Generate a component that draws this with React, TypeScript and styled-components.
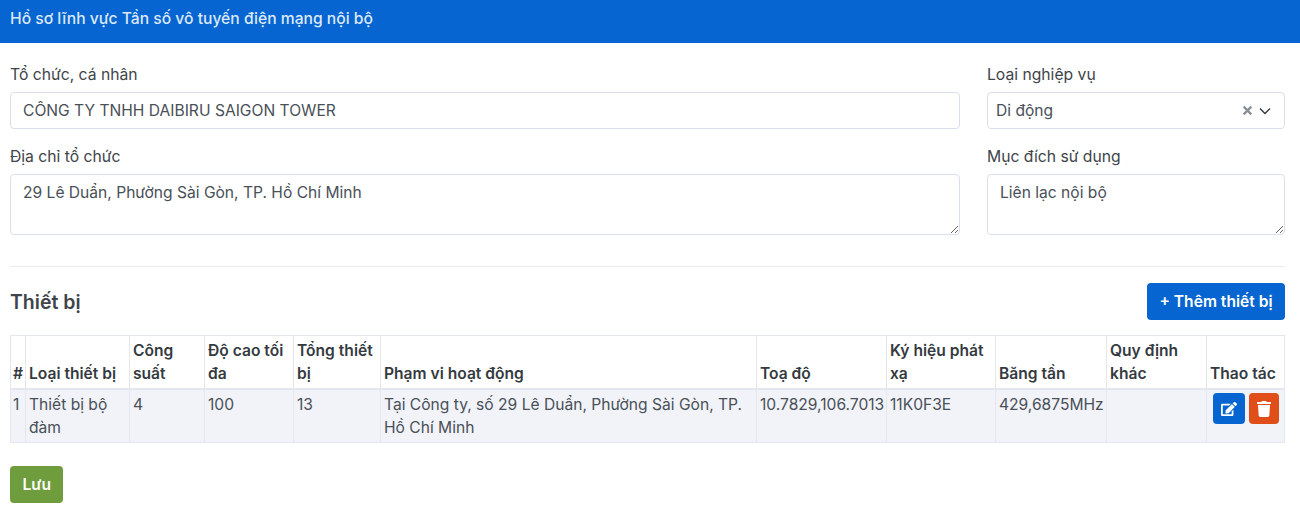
import styled, { createGlobalStyle } from "styled-components";
import { FaEdit, FaTrash } from "react-icons/fa";

const GlobalStyle = createGlobalStyle`
  html, body {
    margin: 0;
    padding: 0;
    background: #fff;
    font-family: Inter, "Noto Sans", sans-serif;
    font-size: 15.6px;
    color: #343a40;
  }
  * { box-sizing: border-box; }
`;

const TopBar = styled.header`
  height: 43px;
  padding: 0 10px 6px;
  display: flex;
  align-items: center;
  background: #0665d0;
  color: #dbe8f8;
  font-size: 15.65px;
  font-weight: 500;
`;

const Content = styled.main`
  padding: 22px 15px 0 10px;
`;

const FormGrid = styled.div`
  display: grid;
  grid-template-columns: 950px 298px;
  column-gap: 27px;
  row-gap: 18px;
`;

const Field = styled.div`
  display: flex;
  flex-direction: column;
`;

const Label = styled.label`
  height: 20px;
  line-height: 20px;
  margin-bottom: 7px;
  font-size: 15.7px;
  color: #3e444a;
`;

const TextInput = styled.input`
  height: 37px;
  padding: 0 12px;
  border: 1px solid #d8dfed;
  border-radius: 4px;
  background: #fff;
  font: inherit;
  color: #495057;
  outline: none;
`;

const TextArea = styled.textarea`
  display: block;
  height: 61px;
  padding: 7px 12px;
  border: 1px solid #d8dfed;
  border-radius: 4px;
  font: inherit;
  line-height: 22px;
  color: #495057;
  outline: none;
`;

const SelectBox = styled.div`
  height: 37px;
  padding: 0 13px 0 8px;
  display: flex;
  align-items: center;
  justify-content: space-between;
  border: 1px solid #d8dfed;
  border-radius: 4px;
  color: #495057;
`;

const SelectIcons = styled.div`
  display: flex;
  align-items: center;
  gap: 6px;
  color: #868e96;
`;

const Divider = styled.hr`
  margin: 31px 0 16px;
  border: 0;
  border-top: 1px solid #e9ecef;
`;

const SectionHead = styled.div`
  display: flex;
  align-items: center;
  justify-content: space-between;
  height: 37px;
  margin-bottom: 15px;
`;

const SectionTitle = styled.h2`
  margin: 0;
  font-size: 19.5px;
  font-weight: 600;
  color: #3e444a;
`;

const Button = styled.button<{ $bg: string }>`
  height: 37px;
  padding: 0 12.5px;
  border: 0;
  border-radius: 4px;
  background: ${(p) => p.$bg};
  color: #fff;
  font-family: inherit;
  font-size: 15.6px;
  font-weight: 600;
`;

const Table = styled.table`
  width: 1274px;
  table-layout: fixed;
  border-collapse: collapse;
  margin-bottom: 23px;
  line-height: 23px;
`;

const Th = styled.th`
  padding: 3px;
  border: 1px solid #e4e7ed;
  border-bottom: 2px solid #e4e7ed;
  text-align: left;
  vertical-align: bottom;
  font-weight: 600;
  color: #343a40;

  &:first-child {
    padding-left: 2px;
  }
`;

const Td = styled.td`
  padding: 3px;
  border: 1px solid #e4e7ed;
  background: #f1f3f9;
  vertical-align: top;
  color: #495057;

  &:first-child {
    padding-left: 2px;
  }
`;

const ActionCell = styled.div`
  display: flex;
  justify-content: center;
  gap: 4px;
`;

const IconButton = styled.button<{ $wide?: boolean; $bg: string }>`
  width: ${(p) => (p.$wide ? 32 : 30)}px;
  height: 31px;
  padding: 0;
  display: flex;
  align-items: center;
  justify-content: center;
  border: 0;
  border-radius: 4px;
  background: ${(p) => p.$bg};
  color: #fff;
  font-size: 16px;
`;

const columns = [
  { title: "#", width: 15 },
  { title: "Loại thiết bị", width: 104 },
  { title: "Công suất", width: 75 },
  { title: "Độ cao tối đa", width: 89 },
  { title: "Tổng thiết bị", width: 87 },
  { title: "Phạm vi hoạt động", width: 376 },
  { title: "Toạ độ", width: 130 },
  { title: "Ký hiệu phát xạ", width: 109 },
  { title: "Băng tần", width: 111 },
  { title: "Quy định khác", width: 100 },
  { title: "Thao tác", width: 78 },
];

const App = () => {
  return (
    <>
      <GlobalStyle />
      <TopBar>Hồ sơ lĩnh vực Tần số vô tuyến điện mạng nội bộ</TopBar>
      <Content>
        <FormGrid>
          <Field>
            <Label>Tổ chức, cá nhân</Label>
            <TextInput readOnly defaultValue="CÔNG TY TNHH DAIBIRU SAIGON TOWER" />
          </Field>
          <Field>
            <Label>Loại nghiệp vụ</Label>
            <SelectBox>
              Di động
              <SelectIcons>
                <svg width="11" height="11" viewBox="0 0 10 10">
                  <path d="M1.5 1.5l7 7M8.5 1.5l-7 7" stroke="currentColor" strokeWidth="2" />
                </svg>
                <svg width="12" height="8" viewBox="0 0 12 8" fill="none">
                  <path d="M1 1.5l5 5 5-5" stroke="#343a40" strokeWidth="1.4" />
                </svg>
              </SelectIcons>
            </SelectBox>
          </Field>
          <Field>
            <Label>Địa chỉ tổ chức</Label>
            <TextArea readOnly defaultValue="29 Lê Duẩn, Phường Sài Gòn, TP. Hồ Chí Minh" />
          </Field>
          <Field>
            <Label>Mục đích sử dụng</Label>
            <TextArea readOnly defaultValue="Liên lạc nội bộ" />
          </Field>
        </FormGrid>

        <Divider />

        <SectionHead>
          <SectionTitle>Thiết bị</SectionTitle>
          <Button $bg="#0665d0">+ Thêm thiết bị</Button>
        </SectionHead>

        <Table>
          <colgroup>
            {columns.map((col) => (
              <col key={col.title} style={{ width: col.width }} />
            ))}
          </colgroup>
          <thead>
            <tr>
              {columns.map((col) => (
                <Th key={col.title}>{col.title}</Th>
              ))}
            </tr>
          </thead>
          <tbody>
            <tr>
              <Td>1</Td>
              <Td>Thiết bị bộ đàm</Td>
              <Td>4</Td>
              <Td>100</Td>
              <Td>13</Td>
              <Td>Tại Công ty, số 29 Lê Duẩn, Phường Sài Gòn, TP. Hồ Chí Minh</Td>
              <Td>10.7829,106.7013</Td>
              <Td>11K0F3E</Td>
              <Td>429,6875MHz</Td>
              <Td></Td>
              <Td>
                <ActionCell>
                  <IconButton $wide $bg="#0665d0">
                    <FaEdit />
                  </IconButton>
                  <IconButton $bg="#e04f1a">
                    <FaTrash />
                  </IconButton>
                </ActionCell>
              </Td>
            </tr>
          </tbody>
        </Table>

        <Button $bg="#6f9c3d">Lưu</Button>
      </Content>
    </>
  );
};

export default App;
